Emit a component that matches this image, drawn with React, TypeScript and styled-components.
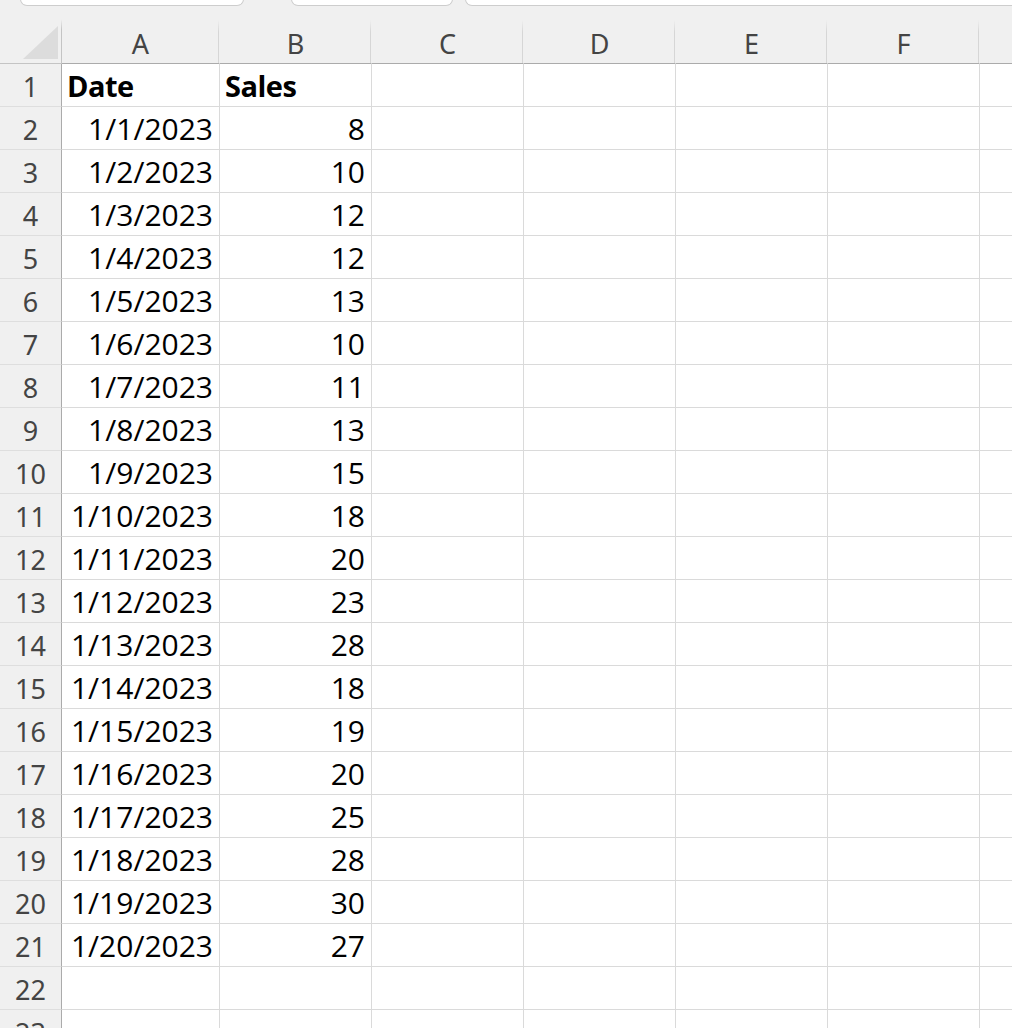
import * as React from 'react';
import styled, { createGlobalStyle } from 'styled-components';

const GlobalStyle = createGlobalStyle`
	html, body {
		margin: 0;
		padding: 0;
		background: #ffffff;
		overflow: hidden;
	}
`;

const HEADER_BG = '#f0f0f0';
const GRID_LINE = '#dadada';
const HEADER_EDGE = '#ababab';

const columns = ['A', 'B', 'C', 'D', 'E', 'F', 'G'];
const columnWidths = [158, 152, 152, 152, 152, 152, 152];

const sales = [8, 10, 12, 12, 13, 10, 11, 13, 15, 18, 20, 23, 28, 18, 19, 20, 25, 28, 30, 27];
const TOTAL_ROWS = 23;

const StyledSheet = styled.div`
	width: 1012px;
	height: 1028px;
	overflow: hidden;
	background: #ffffff;
`;

const StyledTabStrip = styled.div`
	display: flex;
	height: 6px;
	padding-left: 20px;
	background: ${HEADER_BG};
	overflow: hidden;
`;

const StyledTab = styled.div<{ $width?: number; $gap: number }>`
	box-sizing: border-box;
	flex: ${props => (props.$width ? `0 0 ${props.$width}px` : '1 0 auto')};
	margin-right: ${props => props.$gap}px;
	margin-top: -2px;
	height: 8px;
	background: #ffffff;
	border: 1px solid #cdcdcd;
	border-top: none;
	border-radius: ${props => (props.$width ? '0 0 7px 7px' : '0 0 0 7px')};
	border-right-width: ${props => (props.$width ? 1 : 0)}px;
`;

const StyledGrid = styled.div`
	display: grid;
	grid-template-columns: 62px ${columnWidths.map(w => `${w}px`).join(' ')};
	grid-template-rows: 58px repeat(${TOTAL_ROWS}, 43px);
`;

const StyledCorner = styled.div`
	position: relative;
	box-sizing: border-box;
	background: ${HEADER_BG};
	border-bottom: 1px solid ${HEADER_EDGE};
	border-right: 1px solid;
	border-image: linear-gradient(to bottom, transparent 0 14px, #c4c4c4 24px) 1;
	border-bottom-style: solid;
`;

// the select-all triangle in the top left corner
const StyledCornerMark = styled.div`
	position: absolute;
	left: 23px;
	top: 20px;
	width: 35px;
	height: 33px;
	background: #dcdcdc;
	clip-path: polygon(100% 0, 100% 100%, 0 100%);
`;

const StyledColumnHeader = styled.div`
	box-sizing: border-box;
	display: flex;
	align-items: flex-end;
	justify-content: center;
	padding-bottom: 6px;
	background: ${HEADER_BG};
	border-bottom: 1px solid ${HEADER_EDGE};
	border-right: 1px solid transparent;
	background-image: linear-gradient(to bottom, transparent 0 14px, #d6d6d6 26px);
	background-size: 1px 100%;
	background-position: right top;
	background-repeat: no-repeat;
	font-family: 'Noto Sans', 'Open Sans', sans-serif;
	font-size: 27px;
	line-height: 27px;
	color: #444444;
`;

const StyledRowHeader = styled.div`
	box-sizing: border-box;
	display: flex;
	align-items: flex-end;
	justify-content: center;
	padding-bottom: 6px;
	background: ${HEADER_BG};
	border-right: 1px solid ${HEADER_EDGE};
	border-bottom: 1px solid #dedede;
	font-family: 'Noto Sans', 'Open Sans', sans-serif;
	font-size: 27px;
	line-height: 27px;
	color: #444444;
`;

const StyledCell = styled.div<{ $align: 'left' | 'right'; $bold?: boolean }>`
	box-sizing: border-box;
	display: flex;
	align-items: flex-end;
	justify-content: ${props => (props.$align === 'right' ? 'flex-end' : 'flex-start')};
	padding: 0 6px 5px 5px;
	border-right: 1px solid ${GRID_LINE};
	border-bottom: 1px solid ${GRID_LINE};
	font-family: 'Open Sans', 'Noto Sans', sans-serif;
	font-size: ${props => (props.$bold ? 29 : 30)}px;
	line-height: 30px;
	font-weight: ${props => (props.$bold ? 700 : 400)};
	letter-spacing: ${props => (props.$bold ? '-0.5px' : '0')};
	color: #000000;
	white-space: nowrap;
	overflow: hidden;
`;

interface CellValue {
	text: string;
	align: 'left' | 'right';
	bold?: boolean;
}

const cellFor = (row: number, col: number): CellValue | null => {
	if (row === 1) {
		if (col === 0) return { text: 'Date', align: 'left', bold: true };
		if (col === 1) return { text: 'Sales', align: 'left', bold: true };
		return null;
	}
	const index = row - 2;
	if (index < sales.length) {
		if (col === 0) return { text: `1/${index + 1}/2023`, align: 'right' };
		if (col === 1) return { text: String(sales[index]), align: 'right' };
	}
	return null;
};

export default function App() {
	const rows = Array.from({ length: TOTAL_ROWS }, (_, i) => i + 1);

	return (
		<>
			<GlobalStyle />
			<StyledSheet>
				<StyledTabStrip>
					<StyledTab $width={224} $gap={47} />
					<StyledTab $width={162} $gap={12} />
					<StyledTab $gap={0} />
				</StyledTabStrip>
				<StyledGrid>
					<StyledCorner>
						<StyledCornerMark />
					</StyledCorner>
					{columns.map(col => (
						<StyledColumnHeader key={col}>{col}</StyledColumnHeader>
					))}
					{rows.map(row => (
						<React.Fragment key={row}>
							<StyledRowHeader>{row}</StyledRowHeader>
							{columns.map((col, c) => {
								const value = cellFor(row, c);
								return (
									<StyledCell key={col} $align={value ? value.align : 'left'} $bold={value?.bold}>
										{value?.text}
									</StyledCell>
								);
							})}
						</React.Fragment>
					))}
				</StyledGrid>
			</StyledSheet>
		</>
	);
}
